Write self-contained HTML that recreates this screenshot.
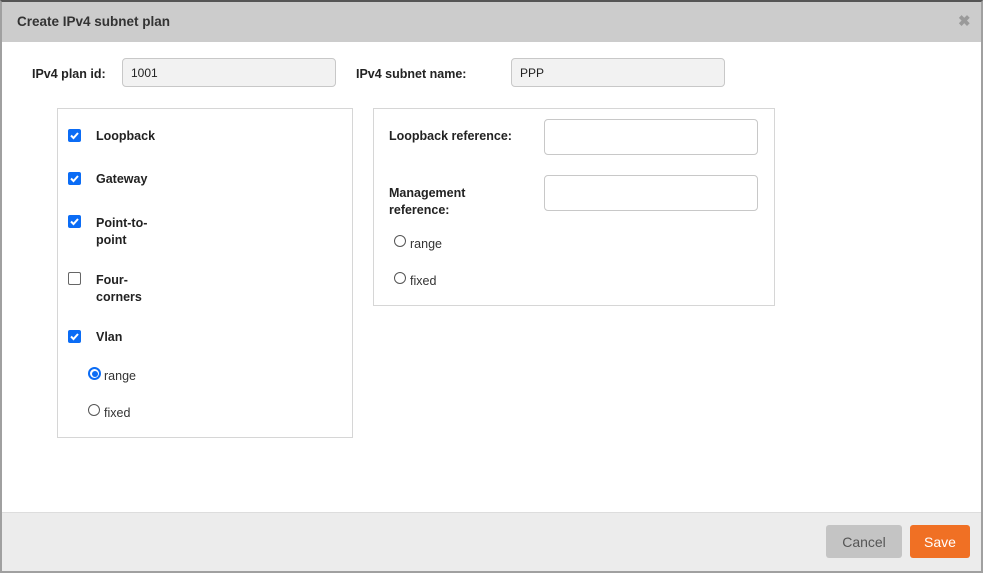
<!DOCTYPE html>
<html><head><style>
*{margin:0;padding:0;box-sizing:border-box}
body{width:983px;height:573px;background:#fff;font-family:"Liberation Sans",sans-serif;position:relative;overflow:hidden;color:#222}
.a{position:absolute}
.frame{left:0;top:0;width:983px;height:573px;border:2px solid #a0a0a0;border-top:2px solid #555}
.hdr{left:2px;top:2px;width:979px;height:40px;background:#cccccc}
.b{font-weight:bold;font-size:12.5px;color:#222}
.inp{border:1px solid #c8c8c8;border-radius:4px;font-size:12px;padding-left:8px;line-height:28px}
.box{border:1px solid #d6d6d6}
.cb{width:13px;height:13px;border-radius:2px;background:#0b6cf5}
.cb svg{display:block}
.cbe{width:13px;height:13px;border-radius:2px;border:1px solid #666;background:#fff}
.rd{width:12px;height:12px;border-radius:50%;border:1px solid #555;background:#fff}
.rds{width:13px;height:13px;border-radius:50%;border:2px solid #0b6cf5;background:#fff}
.rds:after{content:"";position:absolute;left:1.5px;top:1.5px;width:6px;height:6px;border-radius:50%;background:#0b6cf5}
.t{font-size:12.5px;color:#333}
.btn{height:33px;border-radius:3px;font-size:14px;text-align:center;line-height:34px}
</style></head><body>
<div class="a hdr"></div>
<div class="a b" style="left:17px;top:14px;font-size:13.5px;color:#333">Create IPv4 subnet plan</div>
<div class="a" style="left:958px;top:12px;font-size:15px;font-weight:bold;color:#9a9a9a">✖</div>

<div class="a b" style="left:32px;top:67px">IPv4 plan id:</div>
<div class="a inp" style="left:122px;top:58px;width:214px;height:29px;background:#f2f2f2">1001</div>
<div class="a b" style="left:356px;top:67px">IPv4 subnet name:</div>
<div class="a inp" style="left:511px;top:58px;width:214px;height:29px;background:#f2f2f2">PPP</div>

<div class="a box" style="left:57px;top:108px;width:296px;height:330px"></div>
<div class="a cb" style="left:68px;top:129px"><svg width="13" height="13"><path d="M3 6.5l2.5 2.5 4.5-5" stroke="#fff" stroke-width="2" fill="none"/></svg></div>
<div class="a b" style="left:96px;top:129px">Loopback</div>
<div class="a cb" style="left:68px;top:172px"><svg width="13" height="13"><path d="M3 6.5l2.5 2.5 4.5-5" stroke="#fff" stroke-width="2" fill="none"/></svg></div>
<div class="a b" style="left:96px;top:172px">Gateway</div>
<div class="a cb" style="left:68px;top:215px"><svg width="13" height="13"><path d="M3 6.5l2.5 2.5 4.5-5" stroke="#fff" stroke-width="2" fill="none"/></svg></div>
<div class="a b" style="left:96px;top:215px;line-height:17px">Point-to-<br>point</div>
<div class="a cbe" style="left:68px;top:272px"></div>
<div class="a b" style="left:96px;top:272px;line-height:17px">Four-<br>corners</div>
<div class="a cb" style="left:68px;top:330px"><svg width="13" height="13"><path d="M3 6.5l2.5 2.5 4.5-5" stroke="#fff" stroke-width="2" fill="none"/></svg></div>
<div class="a b" style="left:96px;top:330px">Vlan</div>
<div class="a rds" style="left:88px;top:367px"></div>
<div class="a t" style="left:104px;top:369px">range</div>
<div class="a rd" style="left:88px;top:404px"></div>
<div class="a t" style="left:104px;top:406px">fixed</div>

<div class="a box" style="left:373px;top:108px;width:402px;height:198px"></div>
<div class="a b" style="left:389px;top:129px">Loopback reference:</div>
<div class="a inp" style="left:544px;top:119px;width:214px;height:36px"></div>
<div class="a b" style="left:389px;top:185px;line-height:17px">Management<br>reference:</div>
<div class="a inp" style="left:544px;top:175px;width:214px;height:36px"></div>
<div class="a rd" style="left:394px;top:235px"></div>
<div class="a t" style="left:410px;top:237px">range</div>
<div class="a rd" style="left:394px;top:272px"></div>
<div class="a t" style="left:410px;top:274px">fixed</div>

<div class="a" style="left:2px;top:512px;width:979px;height:59px;background:#ececec;border-top:1px solid #ddd"></div>
<div class="a btn" style="left:826px;top:525px;width:76px;background:#c4c4c4;color:#555">Cancel</div>
<div class="a btn" style="left:910px;top:525px;width:60px;background:#f07024;color:#fff">Save</div>
<div class="a frame"></div>
</body></html>
